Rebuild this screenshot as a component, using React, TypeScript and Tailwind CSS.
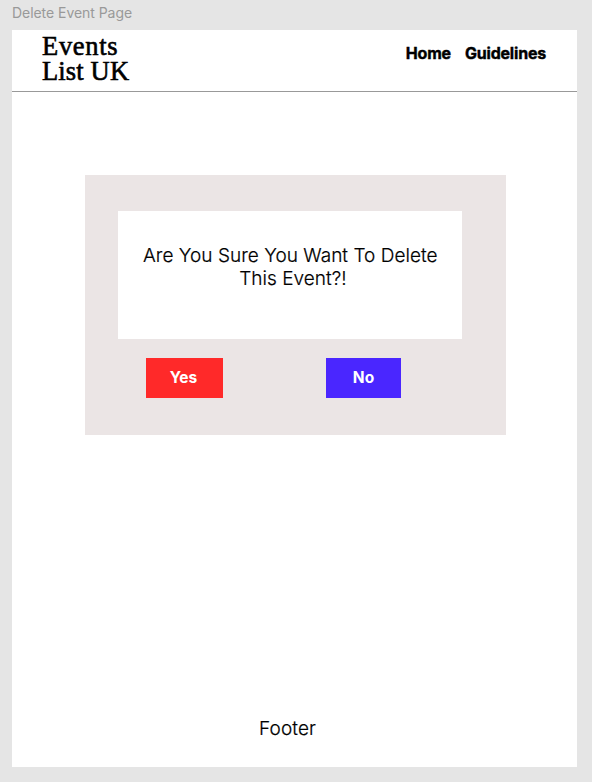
export default function App() {
  return (
    <div className="h-[782px] w-[592px] overflow-hidden bg-[#e5e5e5] pl-3 font-['Inter',sans-serif] text-black">
      <div className="h-[30px] pt-[3px] text-[14px] leading-5 tracking-[-0.05px] text-[#999999]">Delete Event Page</div>
      <main className="flex h-[737px] w-[565px] flex-col bg-white">
        <header className="flex h-[62px] shrink-0 justify-between border-b border-[#999999] pl-[30px] pr-[31px]">
          <h1 className="pt-[4px] font-['Liberation_Serif',serif] text-[26.5px] leading-[25px] [-webkit-text-stroke:0.6px_black]">
            <span className="block h-[25px] whitespace-nowrap tracking-[0.7px]">Events</span>
            <span className="block h-[25px] whitespace-nowrap tracking-[0.15px]">List UK</span>
          </h1>
          <nav className="flex gap-[14px] pt-[13px] text-[16px] font-bold leading-5 tracking-[-0.2px] [-webkit-text-stroke:0.4px_black]">
            <a>Home</a>
            <a>Guidelines</a>
          </nav>
        </header>
        <section className="ml-[73px] mt-[83px] h-[260px] w-[421px] shrink-0 bg-[#ebe5e5] pl-[33px] pt-[36px]">
          <div className="h-[128px] w-[344px] bg-white pl-[6px] pt-[33px] text-center text-[19px] font-light leading-[23px] tracking-[0.03px] [-webkit-text-stroke:0.2px_black]">
            <p className="whitespace-nowrap">Are You Sure You Want To Delete&nbsp;<br />This Event?!</p>
          </div>
          <div className="ml-[28px] mt-[19px] flex gap-[103px] text-[15.5px] font-bold text-white">
            <button className="h-10 w-[77px] bg-[#ff2929] pb-px pr-[2px]">Yes</button>
            <button className="h-10 w-[75px] bg-[#4a26ff] pb-px">No</button>
          </div>
        </section>
        <footer className="mt-auto pb-[26px] pr-[14px] text-center text-[19px] font-light leading-6 tracking-[0.1px] [-webkit-text-stroke:0.2px_black]">Footer</footer>
      </main>
    </div>
  );
}
